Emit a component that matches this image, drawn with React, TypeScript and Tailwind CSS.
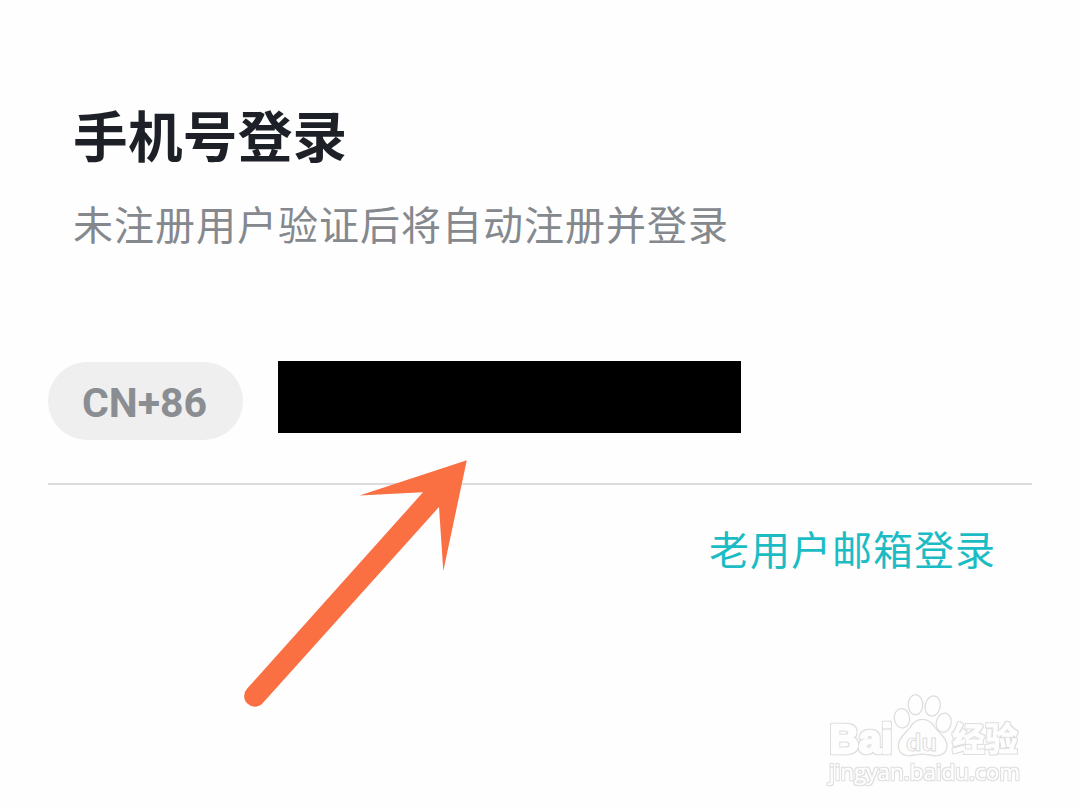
const CJK_FONT = "font-['Noto_Sans_CJK_SC',sans-serif]";

function Arrow() {
  return (
    <svg
      viewBox="0 0 230 254"
      className="pointer-events-none absolute left-[240px] top-[457px] h-[254px] w-[230px] fill-[#fa7043]"
    >
      <path d="M226.8 3.3 L119.5 38.5 L183 35.3 L7.2 231.5 A10.4 10.4 0 0 0 22.4 246.5 L199 50 L203.3 114 Z" />
    </svg>
  );
}

// White lettering with a hairline grey rim around it
function Watermark() {
  return (
    <svg
      viewBox="0 0 220 110"
      className="pointer-events-none absolute left-[820px] top-[690px] h-[110px] w-[220px]"
    >
      <filter id="rim" filterUnits="userSpaceOnUse" x="0" y="0" width="220" height="110" colorInterpolationFilters="sRGB">
        <feMorphology in="SourceAlpha" operator="dilate" radius="1" result="grown" />
        <feFlood floodColor="#dedede" />
        <feComposite in2="grown" operator="in" result="edge" />
        <feMerge>
          <feMergeNode in="edge" />
          <feMergeNode in="SourceGraphic" />
        </feMerge>
      </filter>
      <g fill="#fefefe" stroke="#fefefe" strokeLinejoin="round" filter="url(#rim)">
        <text x="9.5" y="62.5" strokeWidth="2.4" textLength="63" lengthAdjust="spacingAndGlyphs" fontSize="40" fontWeight="700" fontFamily="Liberation Sans, sans-serif">
          Bai
        </text>
        <text x="132" y="61" strokeWidth="0.8" textLength="66" lengthAdjust="spacingAndGlyphs" fontSize="33" fontWeight="700" fontFamily="Noto Sans CJK SC, sans-serif">
          经验
        </text>
        <text x="9" y="90" strokeWidth="0.3" textLength="191" lengthAdjust="spacingAndGlyphs" fontSize="21.5" fontFamily="Open Sans, sans-serif">
          jingyan.baidu.com
        </text>
      </g>
      <g fill="#fefefe" stroke="#dedede" strokeWidth="1.3" strokeLinejoin="round">
        <ellipse cx="82" cy="28.3" rx="7.7" ry="9.7" transform="rotate(-8 82 28.3)" />
        <ellipse cx="95.5" cy="14.7" rx="7.3" ry="10" />
        <ellipse cx="112.7" cy="16" rx="7.5" ry="10.2" transform="rotate(12 112.7 16)" />
        <ellipse cx="123.7" cy="32.7" rx="7.5" ry="9.7" transform="rotate(12 123.7 32.7)" />
        <path d="M102.5 29.3 C96 29.3 92.5 33 90 37.5 C86.5 43 78.3 47 78.3 56 C78.3 62.5 83 65.8 89 65.8 C94 65.8 98 64.2 102.5 64.2 C107 64.2 111 65.8 116 65.8 C122 65.8 127 62.5 127 56 C127 47 118.5 43 115 37.5 C112.5 33 109 29.3 102.5 29.3 Z" />
        <text x="86" y="60.5" strokeWidth="1" textLength="31" lengthAdjust="spacingAndGlyphs" fontSize="23" fontWeight="700" fontFamily="Liberation Sans, sans-serif">
          du
        </text>
      </g>
    </svg>
  );
}

function PhoneField() {
  return (
    <div className="mx-12 mt-[115px] flex h-[124px] items-start border-b-2 border-[#dcdcdc]">
      <button className="mt-px flex h-[78px] w-[195px] items-center justify-center rounded-full bg-[#efefef] pr-0.5 pt-1 font-['Roboto',sans-serif] text-[41px] font-bold leading-none text-[#8a8e93]">
        CN+86
      </button>
      <div className="ml-[35px] h-[72px] w-[463px] bg-black" />
    </div>
  );
}

export default function App() {
  return (
    <div className={`relative flex h-[810px] w-[1080px] flex-col overflow-hidden bg-[#fefefe] ${CJK_FONT}`}>
      <h1 className="ml-[73px] mt-[107px] text-[54.6px] font-bold leading-[54px] tracking-[0.3px] text-[#1d2027]">
        手机号登录
      </h1>
      <p className="ml-[73px] mt-[39px] whitespace-nowrap text-[40px] leading-[46px] tracking-[1px] text-[#85898e]">
        未注册用户验证后将自动注册并登录
      </p>
      <PhoneField />
      <a className="mr-[84px] mt-10 self-end text-[40px] leading-[46px] tracking-[1px] text-[#1cbcc4]">
        老用户邮箱登录
      </a>
      <Arrow />
      <Watermark />
    </div>
  );
}
